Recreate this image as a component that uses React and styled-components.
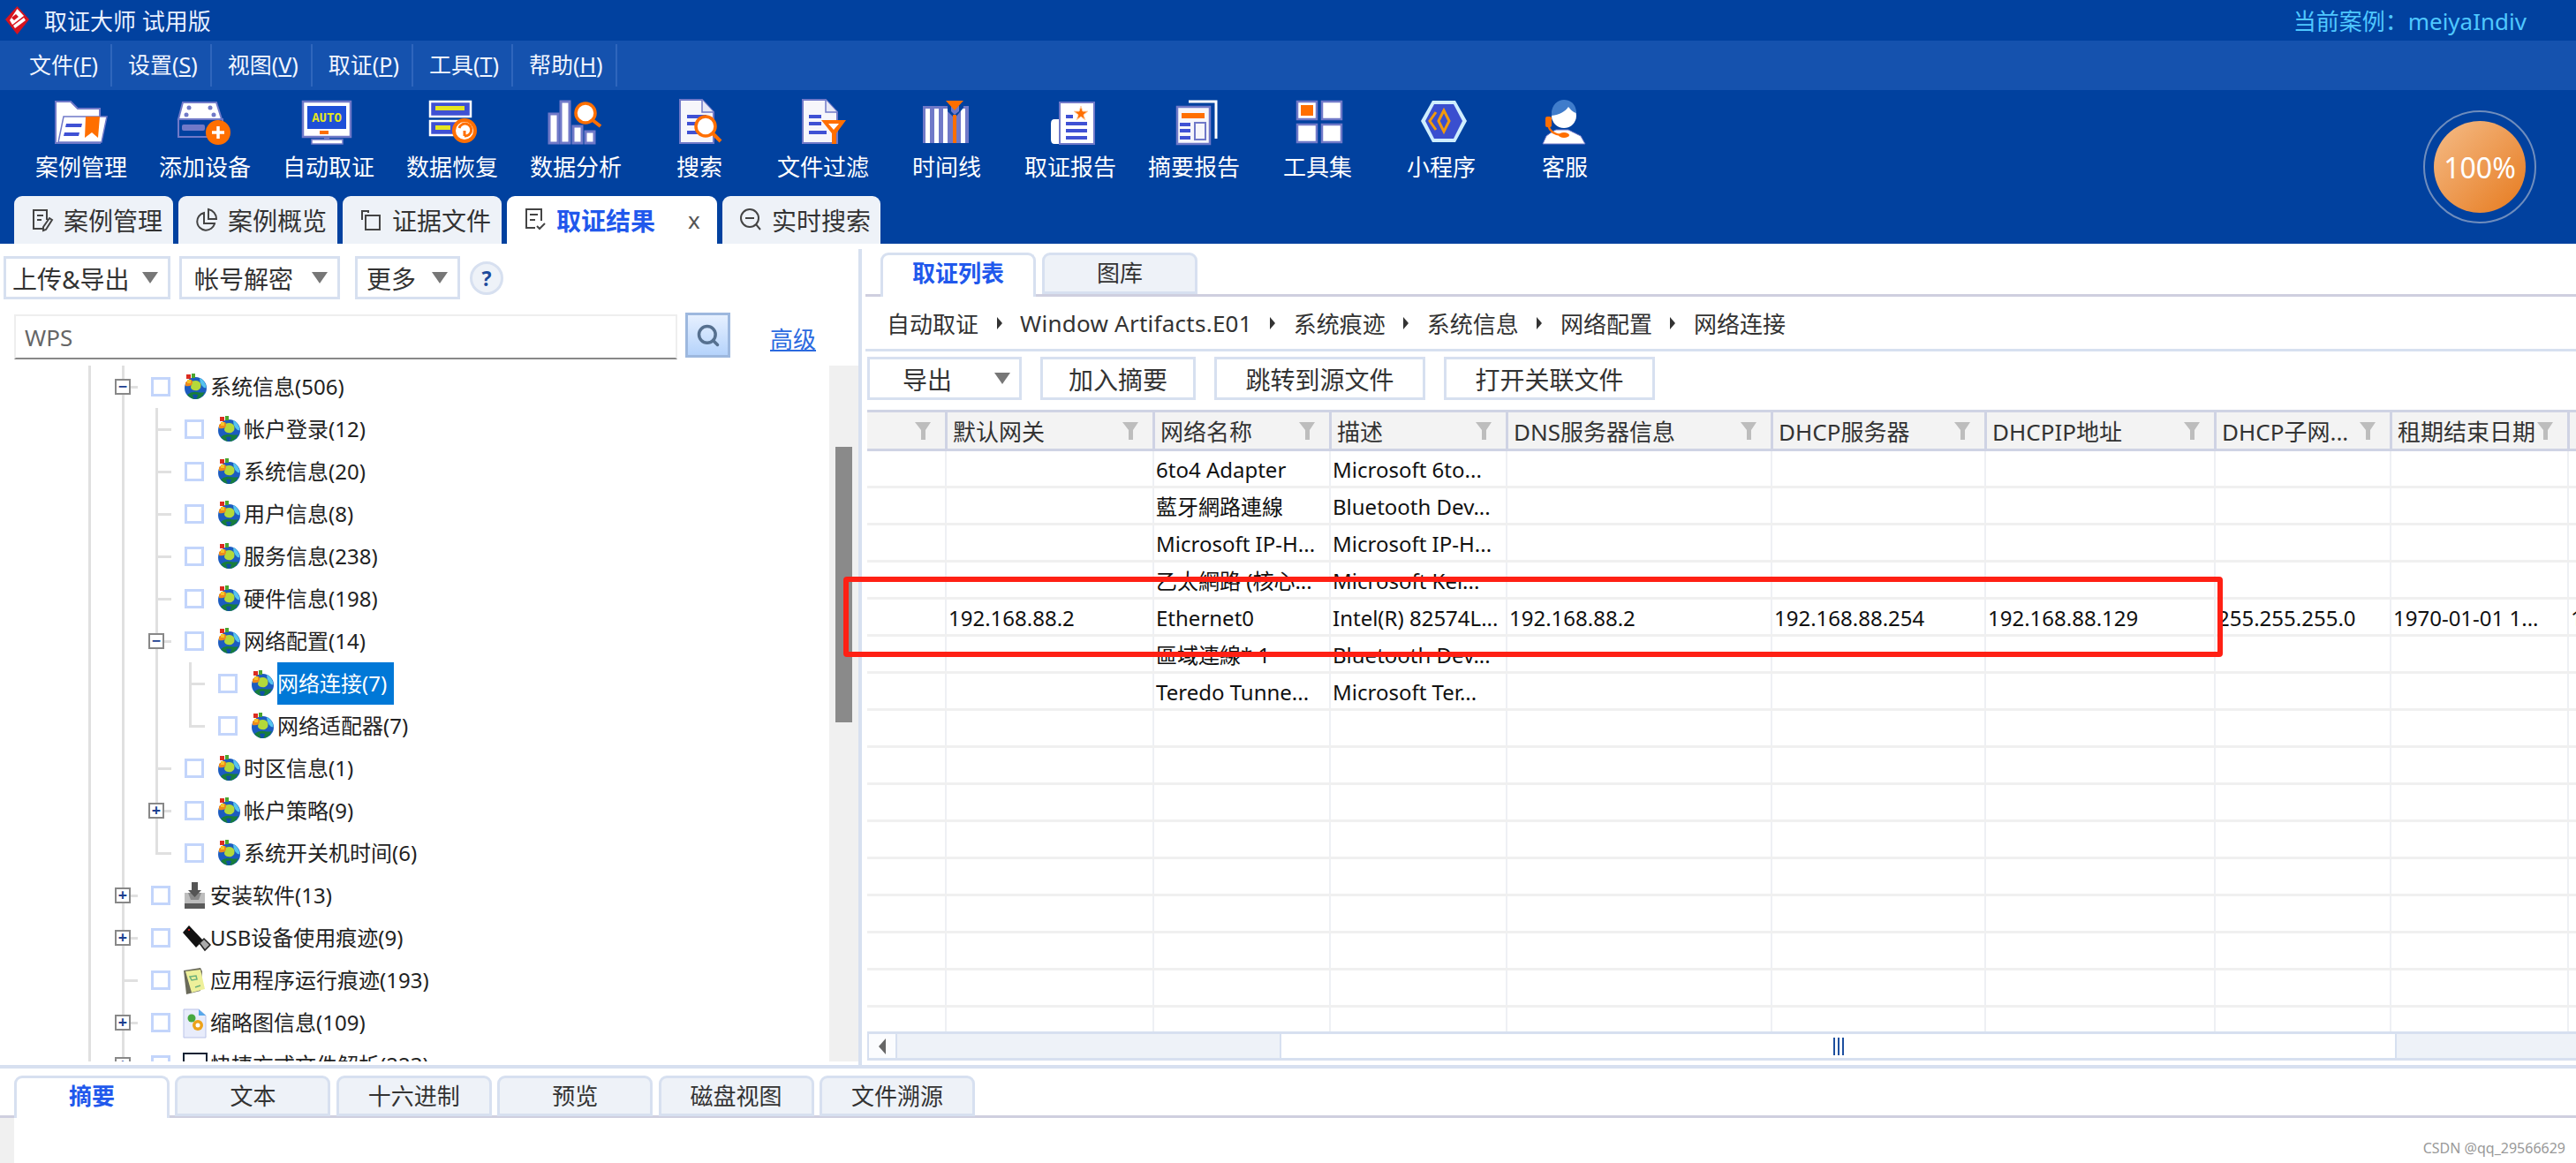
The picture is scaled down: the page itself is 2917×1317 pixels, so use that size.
import React from "react";
import styled, { createGlobalStyle } from "styled-components";
import { Search } from "lucide-react";

const GlobalStyle = createGlobalStyle`
  html, body {
    margin: 0;
    padding: 0;
    background: #fff;
    overflow: hidden;
  }
  * { box-sizing: border-box; }
  body, input {
    font-family: "Noto Sans", "Noto Sans CJK SC", sans-serif;
    color: #222;
  }
`;

const NAVY = "#01419f";
const EDGE = "#7079c8";
const INK = "#3f51d4";
const ORANGE = "#ff6f00";
const PALE = "#d7e0f0";

const Page = styled.div`
  position: relative;
  width: 2917px;
  height: 1317px;
  display: flex;
  flex-direction: column;
  overflow: hidden;
`;

const TitleBar = styled.header`
  height: 46px;
  flex: none;
  background: ${NAVY};
  display: flex;
  align-items: center;
  justify-content: space-between;
  padding: 0 56px 0 6px;
`;

const Brand = styled.div`
  display: flex;
  align-items: center;
  gap: 17px;
  color: #e8f0ff;
  font-size: 26px;
`;

const CaseName = styled.div`
  color: #4fc8ff;
  font-size: 26px;
`;

const MenuBar = styled.nav`
  height: 56px;
  flex: none;
  background: #1552ae;
  display: flex;
  align-items: center;
  padding-left: 15px;
`;

const MenuItem = styled.div`
  height: 48px;
  line-height: 46px;
  padding: 0 14px 0 18px;
  color: #f2f6ff;
  font-size: 25px;
  border-right: 2px solid #2f66bc;
`;

const Ribbon = styled.section`
  height: 174px;
  flex: none;
  background: ${NAVY};
  display: flex;
  align-items: center;
  justify-content: space-between;
  padding-right: 45px;
`;

const RibbonLeft = styled.div`
  display: flex;
  flex-direction: column;
  height: 100%;
`;

const Tools = styled.div`
  height: 120px;
  display: flex;
  padding: 10px 0 0 22px;
`;

const Tool = styled.div`
  width: 140px;
  display: flex;
  flex-direction: column;
  align-items: center;
  color: #fff;
  font-size: 26px;
  svg {
    overflow: visible;
    display: block;
  }
`;

const ToolLabel = styled.div`
  margin-top: 7px;
  line-height: 37px;
  white-space: nowrap;
`;

const Gauge = styled.div`
  width: 128px;
  height: 128px;
  border-radius: 50%;
  border: 2px solid #6f8dbd;
  display: flex;
  align-items: center;
  justify-content: center;
`;

const GaugeFill = styled.div`
  width: 104px;
  height: 104px;
  border-radius: 50%;
  background: linear-gradient(135deg, #f5bc88, #e67a1e);
  color: #fff;
  font-size: 32px;
  display: flex;
  align-items: center;
  justify-content: center;
`;

const CaseTabs = styled.div`
  height: 54px;
  display: flex;
  gap: 6px;
  padding-left: 16px;
`;

const CaseTab = styled.div`
  width: ${(p) => p.$w}px;
  display: flex;
  align-items: center;
  gap: 11px;
  padding-left: 19px;
  border-radius: 9px 9px 0 0;
  background: ${(p) => (p.$active ? "#fff" : "#eef2f8")};
  color: ${(p) => (p.$active ? "#2158ec" : "#333")};
  font-size: 28px;
  font-weight: ${(p) => (p.$active ? 700 : 400)};
`;

const CloseMark = styled.span`
  margin-left: 26px;
  color: #555;
  font-size: 26px;
  font-weight: 400;
`;

const Main = styled.main`
  height: 930px;
  flex: none;
  display: flex;
`;

const LeftPane = styled.section`
  width: 972px;
  flex: none;
  display: flex;
  flex-direction: column;
  padding-top: 14px;
`;

const ActionBar = styled.div`
  display: flex;
  align-items: center;
  gap: 10px;
  padding-left: 4px;
`;

const DropButton = styled.div`
  width: ${(p) => p.$w}px;
  height: 49px;
  margin-left: ${(p) => p.$before || 0}px;
  border: 3px solid ${PALE};
  background: #fff;
  display: flex;
  align-items: center;
  justify-content: space-between;
  padding: 0 11px 0 ${(p) => p.$pad}px;
  font-size: 28px;
  color: #333;
  white-space: nowrap;
`;

const Caret = styled.span`
  width: 0;
  height: 0;
  border-left: 9px solid transparent;
  border-right: 9px solid transparent;
  border-top: 13px solid #777;
`;

const HelpBadge = styled.div`
  width: 38px;
  height: 38px;
  margin-left: 1px;
  border-radius: 50%;
  border: 3px solid ${PALE};
  background: #eef2f8;
  color: #1d4a9c;
  font-size: 23px;
  font-weight: 700;
  display: flex;
  align-items: center;
  justify-content: center;
`;

const SearchRow = styled.div`
  height: 51px;
  margin-top: 15px;
  padding-left: 16px;
  display: flex;
  align-items: flex-start;
`;

const SearchInput = styled.input`
  width: 751px;
  height: 51px;
  margin-top: 2px;
  border: 2px solid #eee;
  border-bottom: 2px solid #888;
  outline: none;
  padding: 0 10px;
  font-size: 26px;
  color: #666;
`;

const SearchButton = styled.div`
  width: 51px;
  height: 51px;
  margin-left: 9px;
  border: 3px solid #9db8de;
  background: linear-gradient(#e6f0ff, #b5d3fb);
  color: #56708f;
  display: flex;
  align-items: center;
  justify-content: center;
`;

const AdvancedLink = styled.a`
  margin: 10px 0 0 45px;
  color: #2b6adf;
  font-size: 26px;
  text-decoration: underline;
`;

const TreeArea = styled.div`
  margin-top: 9px;
  height: 788px;
  display: flex;
`;

const Tree = styled.div`
  flex: 1;
  overflow: hidden;
`;

const TreeRow = styled.div`
  height: 48px;
  display: flex;
  align-items: center;
  padding-left: 100px;
  font-size: 24px;
  white-space: nowrap;
`;

const lineColor = "#e0e0e0";
const guideBackgrounds = {
  line: `linear-gradient(${lineColor}, ${lineColor}) left top / 3px 100% no-repeat`,
  tee: `linear-gradient(${lineColor}, ${lineColor}) left top / 3px 100% no-repeat, linear-gradient(${lineColor}, ${lineColor}) left center / 18px 3px no-repeat`,
  elbow: `linear-gradient(${lineColor}, ${lineColor}) left top / 3px 50% no-repeat, linear-gradient(${lineColor}, ${lineColor}) left center / 18px 3px no-repeat`,
};

const Gutter = styled.span`
  flex: none;
  width: ${(p) => (p.$last ? 33 : 38)}px;
  height: 100%;
  display: flex;
  align-items: center;
  background: ${(p) => guideBackgrounds[p.$kind]};
`;

const Expander = styled.span`
  width: 18px;
  height: 18px;
  margin-left: -8px;
  border: 2px solid #888;
  background: #fff;
  color: #1d3f8f;
  font-size: 18px;
  font-weight: 700;
  line-height: 12px;
  text-align: center;
`;

const CheckBox = styled.span`
  flex: none;
  width: 22px;
  height: 22px;
  border: 3px solid #c3d5fb;
  background: #fff;
`;

const NodeIcon = styled.span`
  flex: none;
  width: 27px;
  height: 30px;
  margin: 0 4px 0 14px;
  svg {
    display: block;
    overflow: visible;
  }
`;

const NodeLabel = styled.span`
  height: 48px;
  line-height: 48px;
  color: ${(p) => (p.$selected ? "#fff" : "#222")};
  background: ${(p) => (p.$selected ? "#0078d7" : "transparent")};
  padding-right: ${(p) => (p.$selected ? 8 : 0)}px;
`;

const VScroll = styled.div`
  width: 33px;
  flex: none;
  background: #f0f0f0;
  padding: 92px 0 0 7px;
`;

const VThumb = styled.div`
  width: 19px;
  height: 312px;
  background: #8a8a8a;
`;

const Splitter = styled.div`
  width: 4px;
  flex: none;
  margin-top: 6px;
  background: ${PALE};
`;

const RightPane = styled.section`
  flex: 1;
  min-width: 0;
  display: flex;
  flex-direction: column;
  padding-top: 10px;
`;

const PaneTabs = styled.div`
  height: ${(p) => (p.$bottom ? 48 : 50)}px;
  flex: none;
  display: flex;
  gap: ${(p) => (p.$bottom ? 6.4 : 7)}px;
  padding-left: ${(p) => (p.$bottom ? 16 : 17)}px;
  margin-left: ${(p) => (p.$bottom ? 0 : 4)}px;
  border-bottom: 3px solid #cfcfdf;
`;

const PaneTab = styled.div`
  width: 176px;
  height: ${(p) => (p.$bottom ? 46 : 47) + (p.$active ? (p.$bottom ? 2 : 3) : 0)}px;
  flex: none;
  border: 3px solid ${PALE};
  border-bottom: ${(p) => (p.$active ? "none" : `3px solid ${PALE}`)};
  border-radius: 9px 9px 0 0;
  background: ${(p) => (p.$active ? "#fff" : "#eef2f8")};
  color: ${(p) => (p.$active ? "#2158ec" : "#333")};
  font-size: 26px;
  font-weight: ${(p) => (p.$active ? 700 : 400)};
  line-height: 41px;
  text-align: center;
`;

const Breadcrumb = styled.div`
  height: 62px;
  flex: none;
  margin-left: 4px;
  padding-left: 24px;
  display: flex;
  align-items: center;
  gap: 20.5px;
  font-size: 26px;
  color: #333;
  border-bottom: 3px solid ${PALE};
`;

const Crumb = styled.span`
  letter-spacing: ${(p) => (p.$wide ? 0.25 : 0)}px;
`;

const CrumbArrow = styled.span`
  width: 0;
  height: 0;
  border-top: 7px solid transparent;
  border-bottom: 7px solid transparent;
  border-left: 6px solid #333;
`;

const TableActions = styled.div`
  height: 49px;
  flex: none;
  margin: 6px 0 11px 6px;
  display: flex;
  gap: 21px;
`;

const ActionButton = styled.div`
  width: ${(p) => p.$w}px;
  border: 3px solid ${PALE};
  font-size: 28px;
  color: #333;
  display: flex;
  align-items: center;
  justify-content: ${(p) => (p.$drop ? "space-between" : "center")};
  padding: ${(p) => (p.$drop ? "0 10px 0 37px" : "0")};
`;

const gridColumns =
  "88px 235px 200px 200px 300px 242px 260px 199px 201px 1fr";

const DataTable = styled.div`
  margin-left: 6px;
  flex: none;
  height: 704px;
  display: flex;
  flex-direction: column;
  overflow: hidden;
`;

const HeadRow = styled.div`
  height: 47px;
  flex: none;
  display: grid;
  grid-template-columns: ${gridColumns};
  background: #f3f3f3;
  border-top: 3px solid #cfd3e4;
  border-bottom: 3px solid #cfd3e4;
`;

const HeadCell = styled.div`
  display: flex;
  align-items: center;
  justify-content: space-between;
  min-width: 0;
  overflow: hidden;
  white-space: nowrap;
  padding: 0 16px 0 6px;
  font-size: 26px;
  color: #333;
  border-left: ${(p) => (p.$first ? "none" : "3px solid #cfd3e4")};
`;

const BodyRow = styled.div`
  height: 42px;
  flex: none;
  display: grid;
  grid-template-columns: ${gridColumns};
  border-bottom: 3px solid #f0f0f0;
`;

const BodyCell = styled.div`
  min-width: 0;
  overflow: hidden;
  white-space: nowrap;
  padding-left: 2px;
  font-size: 24px;
  line-height: 42px;
  color: #111;
  border-left: ${(p) => (p.$first ? "none" : "2px solid #eef0f4")};
`;

const HScroll = styled.div`
  height: 33px;
  flex: none;
  margin-left: 6px;
  background: #eef2f8;
  border-top: 3px solid ${PALE};
  border-bottom: 3px solid ${PALE};
  display: flex;
`;

const ScrollArrow = styled.div`
  width: 34px;
  flex: none;
  background: #fbfcfe;
  border-right: 2px solid ${PALE};
  border-left: 2px solid ${PALE};
  display: flex;
  align-items: center;
  justify-content: center;
`;

const ArrowGlyph = styled.span`
  width: 0;
  height: 0;
  border-top: 9px solid transparent;
  border-bottom: 9px solid transparent;
  border-right: 8px solid #666;
`;

const HThumb = styled.div`
  width: 1265px;
  margin-left: 433px;
  background: #fff;
  border-left: 2px solid ${PALE};
  border-right: 2px solid ${PALE};
  display: flex;
  align-items: center;
  justify-content: center;
  gap: 3px;
`;

const GripBar = styled.span`
  width: 2px;
  height: 20px;
  background: #1d4f9f;
`;

const HorizontalRule = styled.div`
  height: 4px;
  flex: none;
  background: ${PALE};
`;

const BottomPane = styled.section`
  flex: 1;
  padding-top: 8px;
  display: flex;
  flex-direction: column;
`;

const BottomBody = styled.div`
  flex: 1;
  border-left: 16px solid #f0f0f0;
`;

const Watermark = styled.div`
  position: absolute;
  right: 12px;
  bottom: 6px;
  color: #999;
  font-size: 16px;
`;

const Highlight = styled.div`
  position: absolute;
  left: 955px;
  top: 653px;
  width: 1562px;
  height: 91px;
  border: 6px solid #ff2014;
  border-radius: 4px;
`;

const Bar = ({ x, y, w, h = 4, c = INK }) => (
  <rect x={x} y={y} width={w} height={h} fill={c} />
);

const Logo = () => (
  <svg width="27" height="32" viewBox="0 0 27 32">
    <path d="M13.5 0 27 15 13.5 32 0 15Z" fill="#d6141f" />
    <path d="M13.5 3 21 11 8 21 5 16Z" fill="#fff" />
    <path d="M21 13 23 16 11 25 9 22Z" fill="#fff" />
    <path d="M12 9 15 12 10 16 7 13Z" fill="#d6141f" />
  </svg>
);

const ToolSvg = ({ children }) => (
  <svg width="60" height="52" viewBox="0 0 60 52">
    {children}
  </svg>
);

const Magnifier = ({ cx, cy, ex, ey }) => (
  <g>
    <line x1={cx + 8} y1={cy + 8} x2={ex} y2={ey} stroke={ORANGE} strokeWidth="4" />
    <circle cx={cx} cy={cy} r="11" fill="#fff" stroke={ORANGE} strokeWidth="3.5" />
  </g>
);

const DocPage = ({ x, w }) => (
  <g>
    <path
      d={`M${x} 1h${w - 13}l13 14v35h-${w}Z`}
      fill="#f6f6fb"
      stroke={EDGE}
      strokeWidth="2"
    />
    <path d={`M${x + w - 13} 1v14h13`} fill="#e7e8f5" stroke={EDGE} strokeWidth="1.5" />
  </g>
);

const toolIcons = [
  <ToolSvg key="case">
    <path d="M1 3h17l8 8h25v39H1Z" fill="#fff" stroke={EDGE} strokeWidth="2" />
    <path d="M10 20h49l-6 29H4Z" fill="#fff" stroke={EDGE} strokeWidth="1.5" />
    <path d="M13 28h18l-1 4H12Z M11 38h17l-1 4H10Z" fill={INK} />
    <path d="M35 20h16l-2 24-7-6-8 6Z" fill={ORANGE} />
  </ToolSvg>,
  <ToolSvg key="device">
    <path d="M5 4h38l6 19H0Z" fill="#fff" stroke={EDGE} strokeWidth="2" />
    <circle cx="12" cy="10" r="2.5" fill={EDGE} />
    <circle cx="36" cy="10" r="2.5" fill={EDGE} />
    <circle cx="9" cy="18" r="2.5" fill={EDGE} />
    <circle cx="40" cy="18" r="2.5" fill={EDGE} />
    <rect x="0" y="23" width="50" height="20" fill={NAVY} stroke={EDGE} strokeWidth="2" />
    <rect x="4" y="29" width="26" height="7" rx="2" fill={EDGE} />
    <circle cx="45" cy="38" r="14" fill={ORANGE} />
    <path d="M45 31v14M38 38h14" stroke="#fff" strokeWidth="3.5" />
  </ToolSvg>,
  <ToolSvg key="auto">
    <rect x="1" y="3" width="54" height="40" fill="#fff" stroke={EDGE} strokeWidth="2.5" />
    <rect x="6" y="8" width="44" height="26" fill="#1d4fd8" />
    <text
      x="28"
      y="26"
      textAnchor="middle"
      fontFamily="Liberation Mono, monospace"
      fontWeight="700"
      fontSize="14"
      fill="#e6e620"
    >
      AUTO
    </text>
    <rect x="20" y="36" width="10" height="4" fill={ORANGE} />
    <rect x="25" y="43" width="6" height="4" fill={EDGE} />
    <rect x="11" y="46" width="35" height="5" fill="#fff" stroke={EDGE} strokeWidth="1.5" />
  </ToolSvg>,
  <ToolSvg key="recover">
    <rect x="5" y="3" width="46" height="17" fill={INK} stroke="#fff" strokeWidth="2.5" />
    <Bar x={11} y={8} w={33} h={5} c="#e6e620" />
    <rect x="5" y="25" width="32" height="16" fill={INK} stroke="#fff" strokeWidth="2.5" />
    <Bar x={11} y={30} w={17} h={5} c="#e6e620" />
    <circle cx="44" cy="36" r="12" fill="#fff" stroke={ORANGE} strokeWidth="4" />
    <path d="M38 33a7 7 0 1 1 6 9M44 42v-6" fill="none" stroke={ORANGE} strokeWidth="3" />
  </ToolSvg>,
  <ToolSvg key="analyse">
    <rect x="0" y="17" width="10" height="33" fill="#fff" stroke={EDGE} strokeWidth="3" />
    <rect x="13" y="3" width="10" height="47" fill="#fff" stroke={EDGE} strokeWidth="3" />
    <rect x="27" y="31" width="10" height="19" fill="#fff" stroke={EDGE} strokeWidth="3" />
    <rect x="41" y="37" width="10" height="13" fill="#fff" stroke={EDGE} strokeWidth="3" />
    <Magnifier cx={41} cy={16} ex={58} ey={31} />
  </ToolSvg>,
  <ToolSvg key="search">
    <DocPage x={8} w={38} />
    <Bar x={16} y={18} w={22} />
    <Bar x={16} y={26} w={22} />
    <Bar x={16} y={36} w={22} />
    <Magnifier cx={37} cy={31} ex={54} ey={48} />
  </ToolSvg>,
  <ToolSvg key="filter">
    <DocPage x={7} w={39} />
    <Bar x={14} y={18} w={14} />
    <Bar x={14} y={26} w={14} />
    <Bar x={14} y={36} w={20} />
    <path d="M28 24h28l-11 15v12h-5V39Z" fill={ORANGE} />
    <path d="M36 28h12l-6 7Z" fill="#fff" />
  </ToolSvg>,
  <ToolSvg key="timeline">
    <rect x="3" y="8" width="52" height="42" fill={EDGE} />
    <Bar x={6} y={11} w={5} h={39} c="#fff" />
    <Bar x={16} y={11} w={5} h={39} c="#fff" />
    <Bar x={26} y={11} w={5} h={39} c="#fff" />
    <Bar x={46} y={11} w={5} h={39} c="#fff" />
    <path d="M31 4h4v10l4 4 5-4V4h5v6l-10 12-8-8Z" fill={NAVY} />
    <path d="M29 2h20l-10 11Z" fill={ORANGE} />
    <Bar x={37} y={18} w={4} h={32} c={ORANGE} />
  </ToolSvg>,
  <ToolSvg key="report">
    <path d="M18 23h-6q-4 0-4 5v18q0 5 4 5h6Z" fill="#fff" />
    <rect x="18" y="4" width="39" height="47" fill="#fff" stroke={EDGE} strokeWidth="2" />
    <path
      d="M42 8l2 6h6l-5 4 2 6-5-4-5 4 2-6-5-4h6Z"
      fill={ORANGE}
      stroke="#ffd5b0"
      strokeWidth="1"
    />
    <Bar x={25} y={18} w={8} />
    <Bar x={25} y={26} w={24} />
    <Bar x={25} y={34} w={24} />
    <Bar x={25} y={42} w={24} />
  </ToolSvg>,
  <ToolSvg key="summary">
    <path d="M24 3h31v42" fill="none" stroke="#fff" strokeWidth="3" />
    <rect x="11" y="9" width="37" height="42" fill="#f6f6fb" stroke={EDGE} strokeWidth="2.5" />
    <Bar x={16} y={16} w={26} h={6} c={ORANGE} />
    <Bar x={14} y={27} w={12} />
    <Bar x={14} y={34} w={12} />
    <Bar x={14} y={42} w={12} />
    <rect x="31" y="27" width="12" height="19" fill="#f6f6fb" stroke={EDGE} strokeWidth="2" />
  </ToolSvg>,
  <ToolSvg key="kit">
    <rect x="7" y="3" width="22" height="20" fill="#fff" stroke={EDGE} strokeWidth="2.5" />
    <rect x="11" y="7" width="14" height="12" fill={ORANGE} />
    <rect x="35" y="3" width="22" height="20" fill="#fff" stroke={EDGE} strokeWidth="2.5" />
    <rect x="7" y="29" width="22" height="20" fill="#fff" stroke={EDGE} strokeWidth="2.5" />
    <rect x="35" y="29" width="22" height="20" fill="#fff" stroke={EDGE} strokeWidth="2.5" />
  </ToolSvg>,
  <ToolSvg key="mini">
    <path d="M20 2h26l13 23-13 24H20L7 25Z" fill="#cfeeff" />
    <path d="M22 6h22l10 19-10 20H22L12 25Z" fill="#3a4fcf" />
    <path d="M24 15 17 25l7 10" fill="none" stroke="#f29a0c" strokeWidth="3" />
    <path d="M33 13 27 25l6 12 6-12Z" fill="none" stroke="#f29a0c" strokeWidth="3" />
  </ToolSvg>,
  <ToolSvg key="agent">
    <path d="M5 51 9 42q8-6 11-7h14q4 2 14 7l5 9Z" fill="#fff" stroke={EDGE} strokeWidth="1" />
    <circle cx="29" cy="19" r="14" fill="#fff" />
    <path d="M15 19C14 7 22 1 29 1s14 5 14 15c-5-1-7-5-9-7-3 5-10 9-19 10Z" fill="#3f7ccb" />
    <rect x="8" y="20" width="7" height="12" rx="2" fill={ORANGE} />
    <path d="M11 30q3 10 15 11" fill="none" stroke={ORANGE} strokeWidth="2.5" />
    <ellipse cx="29" cy="41" rx="6" ry="3" fill={ORANGE} />
  </ToolSvg>,
];

const toolLabels = [
  "案例管理",
  "添加设备",
  "自动取证",
  "数据恢复",
  "数据分析",
  "搜索",
  "文件过滤",
  "时间线",
  "取证报告",
  "摘要报告",
  "工具集",
  "小程序",
  "客服",
];

const TabSvg = ({ children }) => (
  <svg
    width="26"
    height="28"
    viewBox="0 0 26 28"
    fill="none"
    stroke="#444"
    strokeWidth="2"
    style={{ flex: "none" }}
  >
    {children}
  </svg>
);

const caseTabs = [
  {
    label: "案例管理",
    w: 180,
    icon: (
      <TabSvg>
        <path d="M14 24H3V3h15v11M7 9h7M7 14h5" />
        <path d="M24 14 17 25l-3 1 0-4 7-10Z" />
      </TabSvg>
    ),
  },
  {
    label: "案例概览",
    w: 180,
    icon: (
      <TabSvg>
        <path d="M10 6a10 10 0 1 0 12 12H10Z" />
        <path d="M15 2v11h9A11 11 0 0 0 15 2Z" />
      </TabSvg>
    ),
  },
  {
    label: "证据文件",
    w: 180,
    icon: (
      <TabSvg>
        <path d="M3 14V4h7v2" />
        <path d="M7 9h16v16H7Z" />
      </TabSvg>
    ),
  },
  {
    label: "取证结果",
    w: 238,
    active: true,
    icon: (
      <TabSvg>
        <path d="M13 23H3V2h17v13M7 8h9M7 14h6" />
        <path d="M15 21l3 3 6-6" />
      </TabSvg>
    ),
  },
  {
    label: "实时搜索",
    w: 179,
    icon: (
      <TabSvg>
        <circle cx="12" cy="12" r="10" />
        <path d="M7 12h10M19 19l5 6" />
      </TabSvg>
    ),
  },
];

const Globe = () => (
  <svg width="27" height="30" viewBox="0 0 27 30">
    <circle cx="14" cy="16" r="13" fill="#fff" />
    <circle cx="14.500" cy="16.500" r="12.500" fill="#1c5cc0" />
    <path d="M19 5q7 3 7.500 11.500-3 0-5-3Q19 10 19 5Z" fill="#55c4ee" />
    <path d="M5 24q5-4 11-3 6 1 9 0-4 8-10.500 8Q9 29 5 24Z" fill="#177d3c" />
    <path d="M10 9q7-3 10 2 2 5-3 8-6 1-8-3Z" fill="#b4d93a" />
    <path d="M3 10q3-3 7-3 2 3 0 6-3 2-7 1Z" fill="#ee8a1c" />
    <path d="M4 1h5v5H4Z" fill="#dc2c20" />
    <path d="M10 0h4v5h-4Z" fill="#4aa52f" />
    <path d="M5 7h4v4H5Z" fill="#f7c528" />
    <path d="M11 24q3-1 6 0-1 5-3 5t-3-5Z" fill="#0f4fa8" />
  </svg>
);

const Installer = () => (
  <svg width="27" height="30" viewBox="0 0 27 30">
    <path d="M2 12h23v18H2Z" fill="#bdbdbd" />
    <path d="M2 24h23v6H2Z" fill="#5a5a5a" />
    <path d="M6 12h15l-3 8H9Z" fill="#8a8a8a" />
    <path d="M10 0h7v9h4l-7.500 8L6 9h4Z" fill="#555" />
  </svg>
);

const UsbStick = () => (
  <svg width="32" height="30" viewBox="0 0 32 30">
    <path d="M0 9 7 1l16 17-8 8Z" fill="#111" />
    <path d="M19 21l5-5 7 7-6 6Z" fill="#aaa" stroke="#222" strokeWidth="1.5" />
    <rect x="6" y="5" width="2" height="2" fill="#c22" />
  </svg>
);

const Note = () => (
  <svg width="27" height="32" viewBox="0 0 27 32">
    <path d="M1 4 20 1l2 4-2 22L4 31Z" fill="#6a6a5a" />
    <path d="M3 5 20 3l5 22-15 4Z" fill="#eef09a" />
    <path d="M8 11l7-1 1 4-6 1ZM14 23l6-2" fill="none" stroke="#6bb07a" strokeWidth="1.5" />
  </svg>
);

const Thumb = () => (
  <svg width="27" height="32" viewBox="0 0 27 32">
    <path d="M1 0h17l8 7v25H1Z" fill="#e8ecfb" stroke="#b9c2e8" strokeWidth="1" />
    <path d="M18 0v7h8Z" fill="#58a8ea" />
    <circle cx="10" cy="10" r="4.500" fill="#47a83f" />
    <circle cx="17" cy="18" r="6" fill="#eda21a" />
    <circle cx="17" cy="18" r="2.500" fill="#fff" />
  </svg>
);

const Shortcut = () => (
  <svg width="32" height="32" viewBox="0 0 32 32">
    <rect x="1" y="2" width="26" height="28" fill="#fff" stroke="#123" strokeWidth="2" />
    <path d="M8 12h4v10H8ZM5 15h10v3H5Z" fill="#2ca02c" />
  </svg>
);

const iconMap = {
  globe: <Globe />,
  installer: <Installer />,
  usb: <UsbStick />,
  note: <Note />,
  thumb: <Thumb />,
  shortcut: <Shortcut />,
};

const treeRows = [
  { g: ["line", "tee"], exp: "−", label: "系统信息(506)" },
  { g: ["line", "line", "tee"], label: "帐户登录(12)" },
  { g: ["line", "line", "tee"], label: "系统信息(20)" },
  { g: ["line", "line", "tee"], label: "用户信息(8)" },
  { g: ["line", "line", "tee"], label: "服务信息(238)" },
  { g: ["line", "line", "tee"], label: "硬件信息(198)" },
  { g: ["line", "line", "tee"], exp: "−", label: "网络配置(14)" },
  { g: ["line", "line", "line", "tee"], label: "网络连接(7)", selected: true },
  { g: ["line", "line", "line", "elbow"], label: "网络适配器(7)" },
  { g: ["line", "line", "tee"], label: "时区信息(1)" },
  { g: ["line", "line", "tee"], exp: "+", label: "帐户策略(9)" },
  { g: ["line", "line", "elbow"], label: "系统开关机时间(6)" },
  { g: ["line", "tee"], exp: "+", label: "安装软件(13)", icon: "installer" },
  { g: ["line", "tee"], exp: "+", label: "USB设备使用痕迹(9)", icon: "usb" },
  { g: ["line", "tee"], label: "应用程序运行痕迹(193)", icon: "note" },
  { g: ["line", "tee"], exp: "+", label: "缩略图信息(109)", icon: "thumb" },
  { g: ["line", "tee"], exp: "+", label: "快捷方式文件解析(223)", icon: "shortcut" },
];

const headers = [
  "",
  "默认网关",
  "网络名称",
  "描述",
  "DNS服务器信息",
  "DHCP服务器",
  "DHCPIP地址",
  "DHCP子网...",
  "租期结束日期",
  "",
];

const rows = [
  ["", "", "6to4 Adapter", "Microsoft 6to..."],
  ["", "", "藍牙網路連線", "Bluetooth Dev..."],
  ["", "", "Microsoft IP-H...", "Microsoft IP-H..."],
  ["", "", "乙太網路 (核心...", "Microsoft Ker..."],
  [
    "",
    "192.168.88.2",
    "Ethernet0",
    "Intel(R) 82574L...",
    "192.168.88.2",
    "192.168.88.254",
    "192.168.88.129",
    "255.255.255.0",
    "1970-01-01 1...",
    "1970",
  ],
  ["", "", "區域連線* 1", "Bluetooth Dev..."],
  ["", "", "Teredo Tunne...", "Microsoft Ter..."],
  ...Array.from({ length: 9 }, () => []),
];

const Funnel = () => (
  <svg width="18" height="20" viewBox="0 0 18 20" style={{ flex: "none" }}>
    <path d="M0 0h18l-6 9v11H7V9Z" fill="#bdbdbd" />
  </svg>
);

const crumbs = [
  "自动取证",
  "Window Artifacts.E01",
  "系统痕迹",
  "系统信息",
  "网络配置",
  "网络连接",
];

const bottomTabs = ["摘要", "文本", "十六进制", "预览", "磁盘视图", "文件溯源"];

export default function App() {
  return (
    <Page>
      <GlobalStyle />
      <TitleBar>
        <Brand>
          <Logo />
          取证大师 试用版
        </Brand>
        <CaseName>当前案例：meiyaIndiv</CaseName>
      </TitleBar>
      <MenuBar>
        <MenuItem>文件(<u>F</u>)</MenuItem>
        <MenuItem>设置(<u>S</u>)</MenuItem>
        <MenuItem>视图(<u>V</u>)</MenuItem>
        <MenuItem>取证(<u>P</u>)</MenuItem>
        <MenuItem>工具(<u>T</u>)</MenuItem>
        <MenuItem>帮助(<u>H</u>)</MenuItem>
      </MenuBar>
      <Ribbon>
        <RibbonLeft>
          <Tools>
            {toolLabels.map((label, i) => (
              <Tool key={label}>
                {toolIcons[i]}
                <ToolLabel>{label}</ToolLabel>
              </Tool>
            ))}
          </Tools>
          <CaseTabs>
            {caseTabs.map((tab) => (
              <CaseTab key={tab.label} $w={tab.w} $active={tab.active}>
                {tab.icon}
                {tab.label}
                {tab.active && <CloseMark>x</CloseMark>}
              </CaseTab>
            ))}
          </CaseTabs>
        </RibbonLeft>
        <Gauge>
          <GaugeFill>100%</GaugeFill>
        </Gauge>
      </Ribbon>
      <Main>
        <LeftPane>
          <ActionBar>
            <DropButton $w={189} $pad={7}>
              上传&导出
              <Caret />
            </DropButton>
            <DropButton $w={182} $pad={14}>
              帐号解密
              <Caret />
            </DropButton>
            <DropButton $w={119} $pad={10} $before={7}>
              更多
              <Caret />
            </DropButton>
            <HelpBadge>?</HelpBadge>
          </ActionBar>
          <SearchRow>
            <SearchInput defaultValue="WPS" />
            <SearchButton>
              <Search size={28} strokeWidth={3} />
            </SearchButton>
            <AdvancedLink>高级</AdvancedLink>
          </SearchRow>
          <TreeArea>
            <Tree>
              {treeRows.map((row, i) => (
                <TreeRow key={i}>
                  {row.g.map((kind, j) => (
                    <Gutter key={j} $kind={kind} $last={j === row.g.length - 1}>
                      {row.exp && j === row.g.length - 1 && (
                        <Expander>{row.exp}</Expander>
                      )}
                    </Gutter>
                  ))}
                  <CheckBox />
                  <NodeIcon>{iconMap[row.icon || "globe"]}</NodeIcon>
                  <NodeLabel $selected={row.selected}>{row.label}</NodeLabel>
                </TreeRow>
              ))}
            </Tree>
            <VScroll>
              <VThumb />
            </VScroll>
          </TreeArea>
        </LeftPane>
        <Splitter />
        <RightPane>
          <PaneTabs>
            <PaneTab $active>取证列表</PaneTab>
            <PaneTab>图库</PaneTab>
          </PaneTabs>
          <Breadcrumb>
            {crumbs.map((crumb, i) => (
              <React.Fragment key={crumb}>
                {i > 0 && <CrumbArrow />}
                <Crumb $wide={i === 1}>{crumb}</Crumb>
              </React.Fragment>
            ))}
          </Breadcrumb>
          <TableActions>
            <ActionButton $w={175} $drop>
              导出
              <Caret />
            </ActionButton>
            <ActionButton $w={176}>加入摘要</ActionButton>
            <ActionButton $w={239}>跳转到源文件</ActionButton>
            <ActionButton $w={239}>打开关联文件</ActionButton>
          </TableActions>
          <DataTable>
            <HeadRow>
              {headers.map((title, i) => (
                <HeadCell key={i} $first={i === 0}>
                  <span>{title}</span>
                  {i < 9 && <Funnel />}
                </HeadCell>
              ))}
            </HeadRow>
            {rows.map((row, r) => (
              <BodyRow key={r}>
                {headers.map((_, c) => (
                  <BodyCell key={c} $first={c === 0}>
                    {row[c] || ""}
                  </BodyCell>
                ))}
              </BodyRow>
            ))}
          </DataTable>
          <HScroll>
            <ScrollArrow>
              <ArrowGlyph />
            </ScrollArrow>
            <HThumb>
              <GripBar />
              <GripBar />
              <GripBar />
            </HThumb>
          </HScroll>
        </RightPane>
      </Main>
      <HorizontalRule />
      <BottomPane>
        <PaneTabs $bottom>
          {bottomTabs.map((label, i) => (
            <PaneTab key={label} $bottom $active={i === 0}>
              {label}
            </PaneTab>
          ))}
        </PaneTabs>
        <BottomBody />
      </BottomPane>
      <Highlight />
      <Watermark>CSDN @qq_29566629</Watermark>
    </Page>
  );
}
